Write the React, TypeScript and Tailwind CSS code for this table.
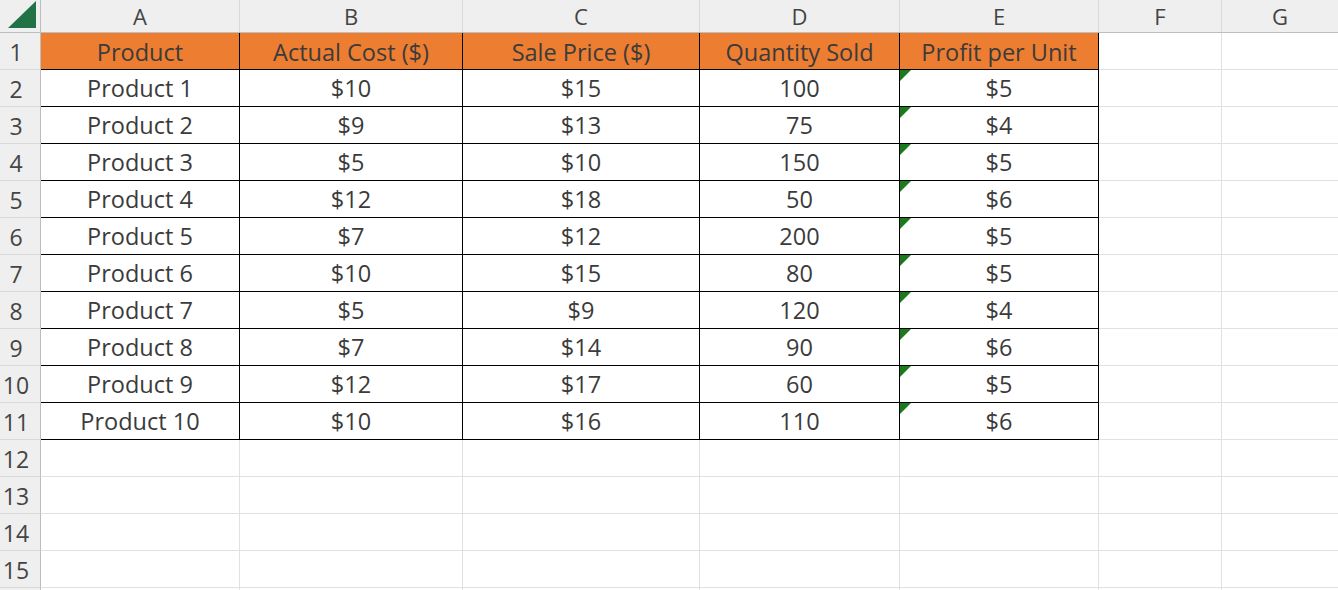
import React from "react";

const data = [
  ["Product 1", "$10", "$15", "100", "$5"],
  ["Product 2", "$9", "$13", "75", "$4"],
  ["Product 3", "$5", "$10", "150", "$5"],
  ["Product 4", "$12", "$18", "50", "$6"],
  ["Product 5", "$7", "$12", "200", "$5"],
  ["Product 6", "$10", "$15", "80", "$5"],
  ["Product 7", "$5", "$9", "120", "$4"],
  ["Product 8", "$7", "$14", "90", "$6"],
  ["Product 9", "$12", "$17", "60", "$5"],
  ["Product 10", "$10", "$16", "110", "$6"],
];

const widths = ["w-[199px]", "w-[223px]", "w-[237px]", "w-[200px]", "w-[199px]"];
const letters = ["A", "B", "C", "D", "E"];

function Tri() {
  return (
    <svg className="absolute left-0 top-0" width="11" height="11" viewBox="0 0 11 11">
      <polygon points="0,0 11,0 0,11" fill="#1b7a1b" />
    </svg>
  );
}

const rowHead =
  "w-[41px] shrink-0 bg-[#efefef] border-r border-b border-[#bdbdbd] border-b-[#d9d9d9] flex items-center justify-center pr-[8px] pt-[3px] text-[23px] text-[#444]";

export default function App() {
  const font = { fontFamily: "'Open Sans', 'Noto Sans', sans-serif" };
  return (
    <div className="w-[1338px] h-[590px] overflow-hidden bg-white text-[#3b3b3b]" style={font}>
      <div className="flex h-[33px] bg-[#efefef] border-b border-[#bdbdbd]">
        <div className="relative w-[41px] shrink-0 border-r border-[#bdbdbd]">
          <svg className="absolute left-0 top-0" width="40" height="32" viewBox="0 0 40 32">
            <polygon points="8,28 36,28 36,1" fill="#217346" />
          </svg>
        </div>
        {letters.map((l, i) => (
          <div key={l} className={`${widths[i]} shrink-0 border-r border-[#d9d9d9] flex items-center justify-center text-[22px] text-[#444]`}>
            {l}
          </div>
        ))}
        <div className="w-[123px] shrink-0 border-r border-[#d9d9d9] flex items-center justify-center text-[22px] text-[#444]">F</div>
        <div className="flex-1 flex items-center justify-center text-[22px] text-[#444]">G</div>
      </div>

      <div className="flex h-[37px]">
        <div className={rowHead}>1</div>
        {["Product", "Actual Cost ($)", "Sale Price ($)", "Quantity Sold", "Profit per Unit"].map((h, i) => (
          <div key={h} className={`${widths[i]} shrink-0 bg-[#ed7d31] border-r border-b border-black flex items-center justify-center pt-[4px] text-[23.5px] text-[#3b3b3b]`}>
            {h}
          </div>
        ))}
        <div className="w-[123px] shrink-0 border-r border-b border-[#e1e1e1]" />
        <div className="flex-1 border-b border-[#e1e1e1]" />
      </div>

      {data.map((row, r) => (
        <div key={r} className="flex h-[37px]">
          <div className={rowHead}>{r + 2}</div>
          {row.map((c, i) => (
            <div key={i} className={`${widths[i]} relative shrink-0 border-r border-b border-black flex items-center justify-center pt-[2px] text-[23.5px]`}>
              {i === 4 && <Tri />}
              {c}
            </div>
          ))}
          <div className="w-[123px] shrink-0 border-r border-b border-[#e1e1e1]" />
          <div className="flex-1 border-b border-[#e1e1e1]" />
        </div>
      ))}

      {[12, 13, 14, 15, 16].map((n) => (
        <div key={n} className="flex h-[37px]">
          <div className={rowHead}>{n === 16 ? "" : n}</div>
          {widths.map((w, i) => (
            <div key={i} className={`${w} shrink-0 border-r border-b border-[#e1e1e1]`} />
          ))}
          <div className="w-[123px] shrink-0 border-r border-b border-[#e1e1e1]" />
          <div className="flex-1 border-b border-[#e1e1e1]" />
        </div>
      ))}
    </div>
  );
}
